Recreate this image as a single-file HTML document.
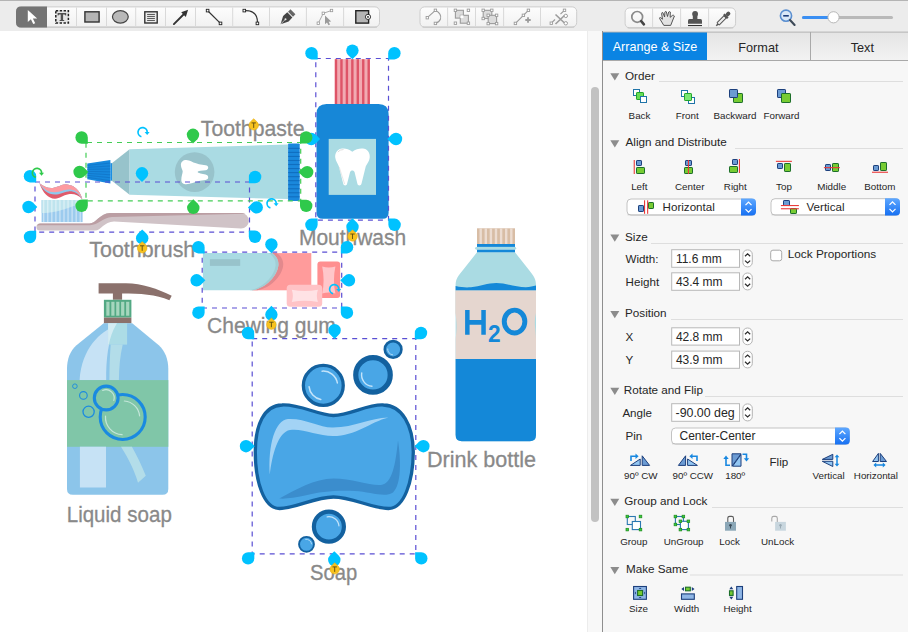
<!DOCTYPE html><html><head><meta charset="utf-8"><style>
*{margin:0;padding:0;box-sizing:border-box}
html,body{width:908px;height:632px;overflow:hidden;background:#fff;font-family:"Liberation Sans",sans-serif;position:relative}
.t{position:absolute;white-space:nowrap}
.a{position:absolute}
</style></head><body>
<svg class="a" style="left:0;top:0" width="587" height="632" viewBox="0 0 587 632"><rect x="334.8" y="59.2" width="35.2" height="46" fill="#f2aab2"/>
<rect x="334.80" y="59.2" width="2.4" height="46" fill="#de5467"/>
<rect x="340.25" y="59.2" width="2.4" height="46" fill="#de5467"/>
<rect x="345.70" y="59.2" width="2.4" height="46" fill="#de5467"/>
<rect x="351.15" y="59.2" width="2.4" height="46" fill="#de5467"/>
<rect x="356.60" y="59.2" width="2.4" height="46" fill="#de5467"/>
<rect x="362.05" y="59.2" width="2.4" height="46" fill="#de5467"/>
<rect x="367.50" y="59.2" width="2.4" height="46" fill="#de5467"/>
<path d="M326.5 104 H378.5 Q388.6 104 388.6 114 V212.8 Q388.6 218.8 382.6 218.8 H322.5 Q316.5 218.8 316.5 212.8 V114 Q316.5 104 326.5 104 Z" fill="#1787d7"/>
<rect x="328.7" y="138.9" width="47.3" height="56" fill="#aadbe3"/>
<path transform="translate(335.3 148.3)" d="M17 3.4 C13 0.5 9 -0.5 5.5 0.5 C1 1.8 -0.5 6 0 9.5 C0.5 13 2.5 15 3.5 18 L7.8 35 C8.2 37.8 11.4 37.8 11.8 35.5 L14.7 24 C15.5 21.5 18.5 21.5 19.3 24 L22.1 35.5 C22.5 37.8 25.8 37.8 26.3 35 L30.5 18 C32 15 34 13 34.4 9.5 C34.8 6 33.5 1.8 29 0.5 C25.5 -0.5 21 0.5 17 3.4 Z" fill="#fff"/>
<path d="M337.8 152 Q340 149.5 343.5 149.5" stroke="#c8c8c8" stroke-width="0.6" fill="none"/><path d="M339.2 167 L344.6 184" stroke="#d8d8d8" stroke-width="0.6" fill="none"/>
<path d="M40 223.5 H89.5 C96 223.5 100 213.3 110 213 L241 213 A7.8 7.8 0 0 1 241 228.6 L114 221.4 C104 221.4 101 230.6 95 230.6 H40 A3.55 3.55 0 0 1 40 223.5 Z" fill="#d0c3c7"/>
<path d="M40 223.5 H89.5 C96 223.5 100 213.3 110 213 L241 213 C243 213 244.5 213.3 245.5 213.8 L112 217 C103 217.5 98 225.2 90 225.2 H40 Q38 225.2 37 225.6 Q38 223.5 40 223.5 Z" fill="#bb9ea3"/>
<rect x="41.6" y="200.1" width="41" height="22" fill="#9ccbee"/>
<path d="M41.6 200.1 H82.6 V204.7 C72 204 62 213 41.6 213 Z" fill="#bfe4ee"/>
<rect x="43.20" y="200.1" width="1.1" height="22" fill="#ffffff" opacity="0.55"/>
<rect x="47.25" y="200.1" width="1.1" height="22" fill="#ffffff" opacity="0.55"/>
<rect x="51.30" y="200.1" width="1.1" height="22" fill="#ffffff" opacity="0.55"/>
<rect x="55.35" y="200.1" width="1.1" height="22" fill="#ffffff" opacity="0.55"/>
<rect x="59.40" y="200.1" width="1.1" height="22" fill="#ffffff" opacity="0.55"/>
<rect x="63.45" y="200.1" width="1.1" height="22" fill="#ffffff" opacity="0.55"/>
<rect x="67.50" y="200.1" width="1.1" height="22" fill="#ffffff" opacity="0.55"/>
<rect x="71.55" y="200.1" width="1.1" height="22" fill="#ffffff" opacity="0.55"/>
<rect x="75.60" y="200.1" width="1.1" height="22" fill="#ffffff" opacity="0.55"/>
<rect x="79.65" y="200.1" width="1.1" height="22" fill="#ffffff" opacity="0.55"/>
<path d="M39.4 183.3 C44 187 48 188.5 53 188 C58 187.5 62 184 67 184.4 C74 185 80 190 82.3 199.2 C78 195 74 193.5 68.5 194.3 C63 195 60 198.7 55 198.7 C48 198.7 43 193 39.4 183.3 Z" fill="#e05b6b"/>
<path d="M39.4 183.3 C44 187 48 188.5 53 188 C58 187.5 62 184 67 184.4 C74 185 80 190 82.3 199.2 C78 193 74 191 68.5 191.4 C63 191.8 60 194.5 55 194.5 C48 194.5 43 190.5 39.4 183.3 Z" fill="#8ec8ec"/>
<path d="M39.4 183.3 C44 187 48 188.5 53 188 C58 187.5 62 184 67 184.4 C74 185 80 190 82.3 199.2 C78 191.5 74 189.5 68.5 189.6 C63 189.8 60 192.3 55 192.3 C48 192.3 43 189 39.4 183.3 Z" fill="#fd9aa1"/>
<path d="M111.5 163.4 L129.6 149.3 V194.7 L111.5 180.6 Z" fill="#97c3cb"/>
<path d="M129.6 149.3 L288.1 144.5 V199.1 L129.6 194.7 Z" fill="#aadbe3"/>
<rect x="288.1" y="143.5" width="11.6" height="57.5" rx="0.8" fill="#1a88dc"/>
<rect x="288.1" y="147.80" width="11.6" height="1.1" fill="#0e66b6" opacity="0.75"/>
<rect x="288.1" y="151.84" width="11.6" height="1.1" fill="#0e66b6" opacity="0.75"/>
<rect x="288.1" y="155.88" width="11.6" height="1.1" fill="#0e66b6" opacity="0.75"/>
<rect x="288.1" y="159.92" width="11.6" height="1.1" fill="#0e66b6" opacity="0.75"/>
<rect x="288.1" y="163.96" width="11.6" height="1.1" fill="#0e66b6" opacity="0.75"/>
<rect x="288.1" y="168.00" width="11.6" height="1.1" fill="#0e66b6" opacity="0.75"/>
<rect x="288.1" y="172.04" width="11.6" height="1.1" fill="#0e66b6" opacity="0.75"/>
<rect x="288.1" y="176.08" width="11.6" height="1.1" fill="#0e66b6" opacity="0.75"/>
<rect x="288.1" y="180.12" width="11.6" height="1.1" fill="#0e66b6" opacity="0.75"/>
<rect x="288.1" y="184.16" width="11.6" height="1.1" fill="#0e66b6" opacity="0.75"/>
<rect x="288.1" y="188.20" width="11.6" height="1.1" fill="#0e66b6" opacity="0.75"/>
<rect x="288.1" y="192.24" width="11.6" height="1.1" fill="#0e66b6" opacity="0.75"/>
<rect x="288.1" y="196.28" width="11.6" height="1.1" fill="#0e66b6" opacity="0.75"/>
<path d="M87.3 163.4 L110.4 160.1 V183.6 L87.3 179.3 Z" fill="#1688dd"/>
<path d="M87.3 165.39 L110.4 163.04" stroke="#0e6abc" stroke-width="0.7" opacity="0.7"/>
<path d="M87.3 167.38 L110.4 165.97" stroke="#0e6abc" stroke-width="0.7" opacity="0.7"/>
<path d="M87.3 169.36 L110.4 168.91" stroke="#0e6abc" stroke-width="0.7" opacity="0.7"/>
<path d="M87.3 171.35 L110.4 171.85" stroke="#0e6abc" stroke-width="0.7" opacity="0.7"/>
<path d="M87.3 173.34 L110.4 174.79" stroke="#0e6abc" stroke-width="0.7" opacity="0.7"/>
<path d="M87.3 175.33 L110.4 177.72" stroke="#0e6abc" stroke-width="0.7" opacity="0.7"/>
<path d="M87.3 177.31 L110.4 180.66" stroke="#0e6abc" stroke-width="0.7" opacity="0.7"/>
<rect x="110.4" y="163.2" width="1.6" height="17.4" fill="#1a8ee3"/>
<circle cx="194.6" cy="172.1" r="19.8" fill="#98c3cb"/>
<path d="M186.2 160 C183 160 180.9 162 180.9 165 C180.9 168 182.7 170 182.7 171.4 C182.7 173 181.3 176 181.3 180 C181.3 183 183.5 184.2 186.2 184.2 C190 184.2 195 182 200 180.8 L205.5 179.9 C207.5 179.5 208.2 178.5 208.2 177.4 C208.2 176 207.3 175 205.5 174.6 L200.5 173.5 C198.5 173 197.6 172.6 197.6 172.1 C197.6 171.6 198.5 171.2 200.5 170.8 L205.5 170.3 C207.3 170 208.2 169 208.2 167.5 C208.2 166.3 207.3 165.5 205.5 165.3 L199 164.2 C195 163.5 191.5 161.5 189 160.6 C188 160.2 187 160 186.2 160 Z" fill="#fff"/>
<rect x="252" y="253.1" width="59.3" height="37.2" fill="#ff9b9b"/>
<path d="M271.9 253.1 H276.3 C282.3 256.5 283.8 262 283.1 266 C281.8 276 270.8 288 257.5 290.3 H252.7 C266 288 277 276 278.3 266 C279 262 277.5 256.5 271.9 253.1 Z" fill="#e3898d"/>
<path d="M202.9 253.1 H271.9 C277.5 256.5 279 262 278.3 266 C277 276 266 288 252.7 290.3 H202.9 Z" fill="#aadbe3"/>
<path d="M271.9 253.1 C277.5 256.5 279 262 278.3 266 C277 276 266 288 252.7 290.3 H249.5 C263 288 274.5 276 275.5 266 C276 262 274.5 256.5 269 253.1 Z" fill="#9cc9cf" opacity="0.7"/>
<rect x="209.9" y="259.2" width="30.3" height="6.7" fill="#98c3cb"/>
<rect x="317.4" y="261.6" width="22.8" height="36.4" rx="3" fill="#ff8f90"/>
<path d="M322.2 266.4 Q328.8 268.5 335.4 266.4 Q332.5 280 335.4 293.5 Q328.8 291.4 322.2 293.5 Q325 280 322.2 266.4 Z" fill="#ffc6ca"/>
<rect x="286.7" y="284.7" width="35.5" height="22.1" rx="3.5" fill="#ffc3c6"/>
<path d="M291.8 289.8 Q304.8 292.3 317.9 289.8 Q315.8 295.9 317.9 302 Q304.8 299.5 291.8 302 Q293.9 295.9 291.8 289.8 Z" fill="#ffe2e5"/>
<path d="M98.6 283.3 H126 C142 283.5 158 289 171.7 295.8 L169.4 300.2 C156 294.5 140 293.6 122.1 293.6 V299.8 H112.9 V293.6 H98.6 Z" fill="#8b716c"/>
<rect x="103.9" y="299.8" width="27.5" height="17.8" fill="#53a984"/>
<rect x="106.3" y="301.8" width="3.2" height="13.9" fill="#a6d6be"/>
<rect x="111.3" y="301.8" width="3.2" height="13.9" fill="#a6d6be"/>
<rect x="116.2" y="301.8" width="3.2" height="13.9" fill="#a6d6be"/>
<rect x="121.1" y="301.8" width="3.2" height="13.9" fill="#a6d6be"/>
<rect x="126.1" y="301.8" width="3.2" height="13.9" fill="#a6d6be"/>
<rect x="103.9" y="317.6" width="27.5" height="5.8" fill="#8b716c"/>
<path d="M103.7 323.3 H132.2 L158.8 345.2 C165 351 168.3 359 168.3 369 V489 Q168.3 494.8 162.5 494.8 H72.8 Q67 494.8 67 489 V369 C67 359 70 351 76.5 345.2 Z" fill="#8cc5ea"/>
<path d="M115.7 325.6 C100 332 82 348 79.6 380.1 H106.2 C106 360 108 340 115.7 325.6 Z" fill="#c6e2f5"/>
<rect x="108.1" y="323.3" width="19" height="21.3" fill="#acdce6"/>
<path d="M115.7 325.6 C112.5 331 110.2 338 108.8 344.6 H108.1 V323.3 H117 Z" fill="#d4ecf3"/>
<path d="M110.7 344.6 H122.7 C120 356 119 368 118.9 380.1 H109.4 C109.5 368 109.8 356 110.7 344.6 Z" fill="#b3dde9"/>
<rect x="67" y="380.1" width="101.3" height="66.7" fill="#80c6a8"/>
<rect x="79.9" y="446.7" width="26.1" height="40.8" fill="#c6e2f5"/>
<path d="M121 446.7 H131.9 C137 456 142 466 145.8 475.7 L138 482.8 C134.5 470 128 458 121 446.7 Z" fill="#b3dde9"/>
<circle cx="122.7" cy="417" r="22.5" fill="none" stroke="#1a8ae0" stroke-width="3.1"/>
<circle cx="106.2" cy="398" r="11.9" fill="#80c6a8" stroke="#1a8ae0" stroke-width="3.1"/>
<circle cx="88.6" cy="411.8" r="5.6" fill="none" stroke="#1a8ae0" stroke-width="1.3"/>
<circle cx="83.4" cy="395.4" r="3.8" fill="none" stroke="#1a8ae0" stroke-width="1.1"/>
<circle cx="74.9" cy="386.2" r="2.3" fill="none" stroke="#1a8ae0" stroke-width="0.9"/>
<path d="M122.1 434.7 A17.5 17.5 0 0 1 105.5 416" stroke="#c4e6da" stroke-width="1.2" fill="none" stroke-linecap="round"/>
<path d="M124.4 401 A16.5 16.5 0 0 1 139.6 415.8" stroke="#c4e6da" stroke-width="1.2" fill="none" stroke-linecap="round"/>
<path d="M102.6 390.4 A8.3 8.3 0 0 1 113.8 400.5" stroke="#c4e6da" stroke-width="1.1" fill="none" stroke-linecap="round"/>
<path d="M282 405 C300 404 318 415.2 333.4 415.5 C350 415.2 368 404 383.5 405 C402 405.5 413 425 413.3 452 C413 482 404 508.5 388.5 508.5 C372 508.5 352 497 333.4 497 C315 497 295 508.5 279.5 508.5 C264 508.5 255.3 482 255.3 452 C255.3 425 264 405.5 282 405 Z" fill="#49a6e6" stroke="#13619f" stroke-width="3.3"/>
<path d="M269.8 474.7 C268 445 275 420 288 419 C305 418 320 428 333 427.5 C355 427 370 418 388.5 417.4 C370 422 356 436 333 436 C318 436 302 428 290 430 C278 432 272 455 269.8 474.7 Z" fill="#a3d3f5"/>
<path d="M279.3 498.5 C295 490 315 478.5 333.4 478.5 C352 478.5 370 486 381 485 C392 484 395.5 465 398 440.6 C401 460 401.5 485 393 492.5 C385 498 370 491.8 355 491 C340 490 320 491 305 495.6 C295 498 285 499 279.3 498.5 Z" fill="#3b8dcd"/>
<circle cx="323.3" cy="385.4" r="19.95" fill="#49a6e6" stroke="#13619f" stroke-width="3.3"/>
<path d="M322.06 371.18 A14.27 14.27 0 0 1 337.36 382.92" stroke="#c4e4fa" stroke-width="1.51" fill="none" stroke-linecap="round"/>
<path d="M320.82 399.46 A14.27 14.27 0 0 1 309.08 386.64" stroke="#c4e4fa" stroke-width="1.51" fill="none" stroke-linecap="round"/>
<circle cx="373" cy="374.9" r="17.25" fill="#49a6e6" stroke="#13619f" stroke-width="5.2"/>
<path d="M372.00 386.28 A11.43 11.43 0 0 1 361.75 372.92" stroke="#c4e4fa" stroke-width="1.39" fill="none" stroke-linecap="round"/>
<circle cx="393.1" cy="349.4" r="8.30" fill="#49a6e6" stroke="#13619f" stroke-width="2.6"/>
<path d="M392.62 354.84 A5.46 5.46 0 0 1 387.66 348.92" stroke="#c4e4fa" stroke-width="0.80" fill="none" stroke-linecap="round"/>
<circle cx="328.9" cy="526.7" r="15.00" fill="#49a6e6" stroke="#13619f" stroke-width="4.2"/>
<path d="M327.15 516.79 A10.06 10.06 0 0 1 338.92 525.82" stroke="#c4e4fa" stroke-width="1.20" fill="none" stroke-linecap="round"/>
<circle cx="306.5" cy="544.3" r="7.45" fill="#49a6e6" stroke="#13619f" stroke-width="1.9"/>
<path d="M305.62 539.31 A5.07 5.07 0 0 1 311.55 543.86" stroke="#c4e4fa" stroke-width="0.80" fill="none" stroke-linecap="round"/>
<rect x="477" y="228.3" width="38" height="16" fill="#d8bda5"/>
<rect x="479.50" y="228.3" width="2.4" height="16" fill="#ecdcd1"/>
<rect x="484.60" y="228.3" width="2.4" height="16" fill="#ecdcd1"/>
<rect x="489.70" y="228.3" width="2.4" height="16" fill="#ecdcd1"/>
<rect x="494.80" y="228.3" width="2.4" height="16" fill="#ecdcd1"/>
<rect x="499.90" y="228.3" width="2.4" height="16" fill="#ecdcd1"/>
<rect x="505.00" y="228.3" width="2.4" height="16" fill="#ecdcd1"/>
<rect x="510.10" y="228.3" width="2.4" height="16" fill="#ecdcd1"/>
<path d="M477 252.3 H515 L528.8 269.8 C533.8 275.8 536 279.5 536 285 V435 Q536 441.2 530 441.2 H461.6 Q455.6 441.2 455.6 435 V285 C455.6 279.5 458 275.8 463.2 269.8 Z" fill="#aadbe3"/>
<rect x="477" y="244" width="38" height="2.9" fill="#1488d8"/>
<rect x="475.1" y="246.9" width="41.1" height="2.8" rx="1.4" fill="#aadbe3"/>
<rect x="477" y="249.7" width="38" height="2.6" fill="#1488d8"/>
<path d="M455.6 286.1 C462 287.5 466 287.5 471 287.3 C480 286.5 488 283.1 496.3 283.1 C506 283.1 516 287.3 525.9 287.3 C530 287.3 533 286 536 285.5 V290.6 H455.6 Z" fill="#1488d8"/>
<path d="M455.3 290.5 H536 V313 C535 318 534.5 322 535 326 C535.5 331 536 335 536 339 V359 H455.6 V339 C456 335 456.6 331 456.6 326 C456.6 321 456 317 455.3 313 Z" fill="#e5d6cf"/>
<path d="M455.6 359 H536 V435 Q536 441.2 529.8 441.2 H461.8 Q455.6 441.2 455.6 435 Z" fill="#1488d8"/>
<path d="M465.1 310 H469.6 V320 H481.3 V310 H485.8 V334.8 H481.3 V324.8 H469.6 V334.8 H465.1 Z" fill="#1488d8"/>
<ellipse cx="514.55" cy="321.55" rx="10.3" ry="11.4" fill="none" stroke="#1488d8" stroke-width="4.9"/>
<text x="488" y="341.5" font-family="Liberation Sans" font-weight="bold" font-size="23.5" fill="#1488d8" textLength="12.6" lengthAdjust="spacingAndGlyphs">2</text>
<text x="200.79" y="136.2" font-family="Liberation Sans" font-size="22.5" fill="#898989" stroke="#898989" stroke-width="0.3" textLength="103.7" lengthAdjust="spacingAndGlyphs">Toothpaste</text>
<text x="89.36" y="257.2" font-family="Liberation Sans" font-size="22.5" fill="#898989" stroke="#898989" stroke-width="0.3" textLength="105.9" lengthAdjust="spacingAndGlyphs">Toothbrush</text>
<text x="298.91" y="244.5" font-family="Liberation Sans" font-size="22.5" fill="#898989" stroke="#898989" stroke-width="0.3" textLength="107.3" lengthAdjust="spacingAndGlyphs">Mouthwash</text>
<text x="207.02" y="333.3" font-family="Liberation Sans" font-size="22.5" fill="#898989" stroke="#898989" stroke-width="0.3" textLength="128.7" lengthAdjust="spacingAndGlyphs">Chewing gum</text>
<text x="66.71" y="522.0" font-family="Liberation Sans" font-size="22.5" fill="#898989" stroke="#898989" stroke-width="0.3" textLength="105.1" lengthAdjust="spacingAndGlyphs">Liquid soap</text>
<text x="310.11" y="579.5" font-family="Liberation Sans" font-size="22.5" fill="#898989" stroke="#898989" stroke-width="0.3" textLength="47.2" lengthAdjust="spacingAndGlyphs">Soap</text>
<text x="426.94" y="467.2" font-family="Liberation Sans" font-size="22.5" fill="#898989" stroke="#898989" stroke-width="0.3" textLength="109.1" lengthAdjust="spacingAndGlyphs">Drink bottle</text>
<rect x="35" y="182" width="214.50" height="50.20" fill="none" stroke="#5a4fd4" stroke-width="1.2" stroke-dasharray="5 5" stroke-dashoffset="0"/>
<rect x="86" y="142.5" width="214.70" height="58.40" fill="none" stroke="#45cd57" stroke-width="1.2" stroke-dasharray="5 5" stroke-dashoffset="-1"/>
<rect x="315.8" y="58.5" width="72.70" height="161.70" fill="none" stroke="#5a4fd4" stroke-width="1.2" stroke-dasharray="5 5" stroke-dashoffset="0"/>
<rect x="202.2" y="252.2" width="139.50" height="55.80" fill="none" stroke="#5a4fd4" stroke-width="1.2" stroke-dasharray="5 5" stroke-dashoffset="0"/>
<rect x="252.2" y="338.6" width="163.60" height="215.30" fill="none" stroke="#5a4fd4" stroke-width="1.2" stroke-dasharray="5 5" stroke-dashoffset="0"/>
<path transform="translate(36.20 182.40) rotate(0)" d="M0 0 L-6.2 0 A6.2 6.2 0 0 1 -12.4 -6.2 A6.2 6.2 0 0 1 -6.2 -12.4 A6.2 6.2 0 0 1 0 -6.2 Z" fill="#00c2ff"/>
<path transform="translate(142.00 182.07) rotate(45)" d="M0 0 L-6.2 0 A6.2 6.2 0 0 1 -12.4 -6.2 A6.2 6.2 0 0 1 -6.2 -12.4 A6.2 6.2 0 0 1 0 -6.2 Z" fill="#00c2ff"/>
<path transform="translate(248.90 183.20) rotate(90)" d="M0 0 L-6.2 0 A6.2 6.2 0 0 1 -12.4 -6.2 A6.2 6.2 0 0 1 -6.2 -12.4 A6.2 6.2 0 0 1 0 -6.2 Z" fill="#00c2ff"/>
<path transform="translate(37.27 207.00) rotate(-45)" d="M0 0 L-6.2 0 A6.2 6.2 0 0 1 -12.4 -6.2 A6.2 6.2 0 0 1 -6.2 -12.4 A6.2 6.2 0 0 1 0 -6.2 Z" fill="#00c2ff"/>
<path transform="translate(247.93 207.40) rotate(135)" d="M0 0 L-6.2 0 A6.2 6.2 0 0 1 -12.4 -6.2 A6.2 6.2 0 0 1 -6.2 -12.4 A6.2 6.2 0 0 1 0 -6.2 Z" fill="#00c2ff"/>
<path transform="translate(36.20 230.80) rotate(270)" d="M0 0 L-6.2 0 A6.2 6.2 0 0 1 -12.4 -6.2 A6.2 6.2 0 0 1 -6.2 -12.4 A6.2 6.2 0 0 1 0 -6.2 Z" fill="#00c2ff"/>
<path transform="translate(142.20 229.43) rotate(225)" d="M0 0 L-6.2 0 A6.2 6.2 0 0 1 -12.4 -6.2 A6.2 6.2 0 0 1 -6.2 -12.4 A6.2 6.2 0 0 1 0 -6.2 Z" fill="#00c2ff"/>
<path transform="translate(248.80 230.60) rotate(180)" d="M0 0 L-6.2 0 A6.2 6.2 0 0 1 -12.4 -6.2 A6.2 6.2 0 0 1 -6.2 -12.4 A6.2 6.2 0 0 1 0 -6.2 Z" fill="#00c2ff"/>
<path transform="translate(317.70 59.40) rotate(0)" d="M0 0 L-6.2 0 A6.2 6.2 0 0 1 -12.4 -6.2 A6.2 6.2 0 0 1 -6.2 -12.4 A6.2 6.2 0 0 1 0 -6.2 Z" fill="#00c2ff"/>
<path transform="translate(352.40 59.37) rotate(45)" d="M0 0 L-6.2 0 A6.2 6.2 0 0 1 -12.4 -6.2 A6.2 6.2 0 0 1 -6.2 -12.4 A6.2 6.2 0 0 1 0 -6.2 Z" fill="#00c2ff"/>
<path transform="translate(388.20 59.40) rotate(90)" d="M0 0 L-6.2 0 A6.2 6.2 0 0 1 -12.4 -6.2 A6.2 6.2 0 0 1 -6.2 -12.4 A6.2 6.2 0 0 1 0 -6.2 Z" fill="#00c2ff"/>
<path transform="translate(320.07 139.00) rotate(-45)" d="M0 0 L-6.2 0 A6.2 6.2 0 0 1 -12.4 -6.2 A6.2 6.2 0 0 1 -6.2 -12.4 A6.2 6.2 0 0 1 0 -6.2 Z" fill="#00c2ff"/>
<path transform="translate(387.23 139.00) rotate(135)" d="M0 0 L-6.2 0 A6.2 6.2 0 0 1 -12.4 -6.2 A6.2 6.2 0 0 1 -6.2 -12.4 A6.2 6.2 0 0 1 0 -6.2 Z" fill="#00c2ff"/>
<path transform="translate(317.60 218.60) rotate(270)" d="M0 0 L-6.2 0 A6.2 6.2 0 0 1 -12.4 -6.2 A6.2 6.2 0 0 1 -6.2 -12.4 A6.2 6.2 0 0 1 0 -6.2 Z" fill="#00c2ff"/>
<path transform="translate(352.50 218.23) rotate(225)" d="M0 0 L-6.2 0 A6.2 6.2 0 0 1 -12.4 -6.2 A6.2 6.2 0 0 1 -6.2 -12.4 A6.2 6.2 0 0 1 0 -6.2 Z" fill="#00c2ff"/>
<path transform="translate(388.40 218.60) rotate(180)" d="M0 0 L-6.2 0 A6.2 6.2 0 0 1 -12.4 -6.2 A6.2 6.2 0 0 1 -6.2 -12.4 A6.2 6.2 0 0 1 0 -6.2 Z" fill="#00c2ff"/>
<path transform="translate(204.60 253.40) rotate(0)" d="M0 0 L-6.2 0 A6.2 6.2 0 0 1 -12.4 -6.2 A6.2 6.2 0 0 1 -6.2 -12.4 A6.2 6.2 0 0 1 0 -6.2 Z" fill="#00c2ff"/>
<path transform="translate(271.40 253.17) rotate(45)" d="M0 0 L-6.2 0 A6.2 6.2 0 0 1 -12.4 -6.2 A6.2 6.2 0 0 1 -6.2 -12.4 A6.2 6.2 0 0 1 0 -6.2 Z" fill="#00c2ff"/>
<path transform="translate(340.80 253.40) rotate(90)" d="M0 0 L-6.2 0 A6.2 6.2 0 0 1 -12.4 -6.2 A6.2 6.2 0 0 1 -6.2 -12.4 A6.2 6.2 0 0 1 0 -6.2 Z" fill="#00c2ff"/>
<path transform="translate(205.37 280.30) rotate(-45)" d="M0 0 L-6.2 0 A6.2 6.2 0 0 1 -12.4 -6.2 A6.2 6.2 0 0 1 -6.2 -12.4 A6.2 6.2 0 0 1 0 -6.2 Z" fill="#00c2ff"/>
<path transform="translate(340.23 280.30) rotate(135)" d="M0 0 L-6.2 0 A6.2 6.2 0 0 1 -12.4 -6.2 A6.2 6.2 0 0 1 -6.2 -12.4 A6.2 6.2 0 0 1 0 -6.2 Z" fill="#00c2ff"/>
<path transform="translate(204.60 306.50) rotate(270)" d="M0 0 L-6.2 0 A6.2 6.2 0 0 1 -12.4 -6.2 A6.2 6.2 0 0 1 -6.2 -12.4 A6.2 6.2 0 0 1 0 -6.2 Z" fill="#00c2ff"/>
<path transform="translate(271.40 305.83) rotate(225)" d="M0 0 L-6.2 0 A6.2 6.2 0 0 1 -12.4 -6.2 A6.2 6.2 0 0 1 -6.2 -12.4 A6.2 6.2 0 0 1 0 -6.2 Z" fill="#00c2ff"/>
<path transform="translate(340.80 306.50) rotate(180)" d="M0 0 L-6.2 0 A6.2 6.2 0 0 1 -12.4 -6.2 A6.2 6.2 0 0 1 -6.2 -12.4 A6.2 6.2 0 0 1 0 -6.2 Z" fill="#00c2ff"/>
<path transform="translate(254.20 339.20) rotate(0)" d="M0 0 L-6.2 0 A6.2 6.2 0 0 1 -12.4 -6.2 A6.2 6.2 0 0 1 -6.2 -12.4 A6.2 6.2 0 0 1 0 -6.2 Z" fill="#00c2ff"/>
<path transform="translate(334.60 338.97) rotate(45)" d="M0 0 L-6.2 0 A6.2 6.2 0 0 1 -12.4 -6.2 A6.2 6.2 0 0 1 -6.2 -12.4 A6.2 6.2 0 0 1 0 -6.2 Z" fill="#00c2ff"/>
<path transform="translate(414.80 339.20) rotate(90)" d="M0 0 L-6.2 0 A6.2 6.2 0 0 1 -12.4 -6.2 A6.2 6.2 0 0 1 -6.2 -12.4 A6.2 6.2 0 0 1 0 -6.2 Z" fill="#00c2ff"/>
<path transform="translate(254.77 446.20) rotate(-45)" d="M0 0 L-6.2 0 A6.2 6.2 0 0 1 -12.4 -6.2 A6.2 6.2 0 0 1 -6.2 -12.4 A6.2 6.2 0 0 1 0 -6.2 Z" fill="#00c2ff"/>
<path transform="translate(414.63 446.20) rotate(135)" d="M0 0 L-6.2 0 A6.2 6.2 0 0 1 -12.4 -6.2 A6.2 6.2 0 0 1 -6.2 -12.4 A6.2 6.2 0 0 1 0 -6.2 Z" fill="#00c2ff"/>
<path transform="translate(254.30 552.20) rotate(270)" d="M0 0 L-6.2 0 A6.2 6.2 0 0 1 -12.4 -6.2 A6.2 6.2 0 0 1 -6.2 -12.4 A6.2 6.2 0 0 1 0 -6.2 Z" fill="#00c2ff"/>
<path transform="translate(334.30 551.23) rotate(225)" d="M0 0 L-6.2 0 A6.2 6.2 0 0 1 -12.4 -6.2 A6.2 6.2 0 0 1 -6.2 -12.4 A6.2 6.2 0 0 1 0 -6.2 Z" fill="#00c2ff"/>
<path transform="translate(415.10 552.20) rotate(180)" d="M0 0 L-6.2 0 A6.2 6.2 0 0 1 -12.4 -6.2 A6.2 6.2 0 0 1 -6.2 -12.4 A6.2 6.2 0 0 1 0 -6.2 Z" fill="#00c2ff"/>
<path transform="translate(87.80 143.70) rotate(0)" d="M0 0 L-6.2 0 A6.2 6.2 0 0 1 -12.4 -6.2 A6.2 6.2 0 0 1 -6.2 -12.4 A6.2 6.2 0 0 1 0 -6.2 Z" fill="#2fc94b"/>
<path transform="translate(193.00 143.57) rotate(45)" d="M0 0 L-6.2 0 A6.2 6.2 0 0 1 -12.4 -6.2 A6.2 6.2 0 0 1 -6.2 -12.4 A6.2 6.2 0 0 1 0 -6.2 Z" fill="#2fc94b"/>
<path transform="translate(300.00 143.60) rotate(90)" d="M0 0 L-6.2 0 A6.2 6.2 0 0 1 -12.4 -6.2 A6.2 6.2 0 0 1 -6.2 -12.4 A6.2 6.2 0 0 1 0 -6.2 Z" fill="#2fc94b"/>
<path transform="translate(88.37 172.00) rotate(-45)" d="M0 0 L-6.2 0 A6.2 6.2 0 0 1 -12.4 -6.2 A6.2 6.2 0 0 1 -6.2 -12.4 A6.2 6.2 0 0 1 0 -6.2 Z" fill="#2fc94b"/>
<path transform="translate(298.43 172.10) rotate(135)" d="M0 0 L-6.2 0 A6.2 6.2 0 0 1 -12.4 -6.2 A6.2 6.2 0 0 1 -6.2 -12.4 A6.2 6.2 0 0 1 0 -6.2 Z" fill="#2fc94b"/>
<path transform="translate(87.80 199.60) rotate(270)" d="M0 0 L-6.2 0 A6.2 6.2 0 0 1 -12.4 -6.2 A6.2 6.2 0 0 1 -6.2 -12.4 A6.2 6.2 0 0 1 0 -6.2 Z" fill="#2fc94b"/>
<path transform="translate(193.30 199.13) rotate(225)" d="M0 0 L-6.2 0 A6.2 6.2 0 0 1 -12.4 -6.2 A6.2 6.2 0 0 1 -6.2 -12.4 A6.2 6.2 0 0 1 0 -6.2 Z" fill="#2fc94b"/>
<path transform="translate(300.00 199.70) rotate(180)" d="M0 0 L-6.2 0 A6.2 6.2 0 0 1 -12.4 -6.2 A6.2 6.2 0 0 1 -6.2 -12.4 A6.2 6.2 0 0 1 0 -6.2 Z" fill="#2fc94b"/>
<g transform="translate(253.7 125.3)"><path d="M0 -6.6 L3.2 -3.6 A4.8 4.8 0 1 1 -3.2 -3.6 Z" fill="#f7c21f" stroke="#e0a810" stroke-width="0.5"/><path d="M-2.2 -2.4 H2.2 M0 -2.4 V2.6" stroke="#5a4a10" stroke-width="0.9"/></g>
<g transform="translate(142.2 248.2)"><path d="M0 -6.6 L3.2 -3.6 A4.8 4.8 0 1 1 -3.2 -3.6 Z" fill="#f7c21f" stroke="#e0a810" stroke-width="0.5"/><path d="M-2.2 -2.4 H2.2 M0 -2.4 V2.6" stroke="#5a4a10" stroke-width="0.9"/></g>
<g transform="translate(352.5 236.4)"><path d="M0 -6.6 L3.2 -3.6 A4.8 4.8 0 1 1 -3.2 -3.6 Z" fill="#f7c21f" stroke="#e0a810" stroke-width="0.5"/><path d="M-2.2 -2.4 H2.2 M0 -2.4 V2.6" stroke="#5a4a10" stroke-width="0.9"/></g>
<g transform="translate(271.4 324.6)"><path d="M0 -6.6 L3.2 -3.6 A4.8 4.8 0 1 1 -3.2 -3.6 Z" fill="#f7c21f" stroke="#e0a810" stroke-width="0.5"/><path d="M-2.2 -2.4 H2.2 M0 -2.4 V2.6" stroke="#5a4a10" stroke-width="0.9"/></g>
<g transform="translate(334.7 569.3)"><path d="M0 -6.6 L3.2 -3.6 A4.8 4.8 0 1 1 -3.2 -3.6 Z" fill="#f7c21f" stroke="#e0a810" stroke-width="0.5"/><path d="M-2.2 -2.4 H2.2 M0 -2.4 V2.6" stroke="#5a4a10" stroke-width="0.9"/></g>
<g transform="translate(142.6 132.3)"><path d="M-1.2 4.3999999999999995 A4.6 4.6 0 1 1 4.6 0.3" fill="none" stroke="#00c2ff" stroke-width="1.7"/><path d="M1.9999999999999996 -0.2 L7.0 -0.2 L4.6 2.8 Z" fill="#00c2ff"/></g>
<g transform="translate(271.6 203.5)"><path d="M-1.2 4.3999999999999995 A4.6 4.6 0 1 1 4.6 0.3" fill="none" stroke="#00c2ff" stroke-width="1.7"/><path d="M1.9999999999999996 -0.2 L7.0 -0.2 L4.6 2.8 Z" fill="#00c2ff"/></g>
<g transform="translate(334.2 289.3)"><path d="M-1.2 4.3999999999999995 A4.6 4.6 0 1 1 4.6 0.3" fill="none" stroke="#00c2ff" stroke-width="1.7"/><path d="M1.9999999999999996 -0.2 L7.0 -0.2 L4.6 2.8 Z" fill="#00c2ff"/></g>
<g transform="translate(37 173)"><path d="M-1.2 4.3999999999999995 A4.6 4.6 0 1 1 4.6 0.3" fill="none" stroke="#2fc94b" stroke-width="1.7"/><path d="M1.9999999999999996 -0.2 L7.0 -0.2 L4.6 2.8 Z" fill="#2fc94b"/></g></svg>
<div class="a" style="left:0;top:0;width:908px;height:31px;background:#ececec;border-top:1px solid #b4b4b4"></div>
<svg class="a" style="left:0;top:0" width="908" height="32" viewBox="0 0 908 32"><defs><linearGradient id="btng" x1="0" y1="0" x2="0" y2="1"><stop offset="0" stop-color="#fdfdfd"/><stop offset="1" stop-color="#f1f1f1"/></linearGradient></defs>
<rect x="16.5" y="6.9" width="363" height="20.200000000000003" rx="4.5" fill="url(#btng)" stroke="#cdcdcd" stroke-width="1"/>
<rect x="19" y="26.6" width="358" height="1" fill="#bdbdbd" opacity="0.7"/>
<rect x="76.0" y="7.4" width="1" height="19.200000000000003" fill="#d9d9d9"/>
<rect x="106.0" y="7.4" width="1" height="19.200000000000003" fill="#d9d9d9"/>
<rect x="135.2" y="7.4" width="1" height="19.200000000000003" fill="#d9d9d9"/>
<rect x="165.0" y="7.4" width="1" height="19.200000000000003" fill="#d9d9d9"/>
<rect x="195.0" y="7.4" width="1" height="19.200000000000003" fill="#d9d9d9"/>
<rect x="232.2" y="7.4" width="1" height="19.200000000000003" fill="#d9d9d9"/>
<rect x="269.0" y="7.4" width="1" height="19.200000000000003" fill="#d9d9d9"/>
<rect x="305.9" y="7.4" width="1" height="19.200000000000003" fill="#d9d9d9"/>
<rect x="343.1" y="7.4" width="1" height="19.200000000000003" fill="#d9d9d9"/>
<rect x="420.0" y="6.9" width="156.70000000000005" height="20.200000000000003" rx="4.5" fill="url(#btng)" stroke="#cdcdcd" stroke-width="1"/>
<rect x="422.5" y="26.6" width="151.70000000000005" height="1" fill="#bdbdbd" opacity="0.7"/>
<rect x="447.1" y="7.4" width="1" height="19.200000000000003" fill="#d9d9d9"/>
<rect x="475.0" y="7.4" width="1" height="19.200000000000003" fill="#d9d9d9"/>
<rect x="503.1" y="7.4" width="1" height="19.200000000000003" fill="#d9d9d9"/>
<rect x="540.0" y="7.4" width="1" height="19.200000000000003" fill="#d9d9d9"/>
<rect x="625.1" y="7.9" width="110.5" height="20.0" rx="4.5" fill="url(#btng)" stroke="#cdcdcd" stroke-width="1"/>
<rect x="627.6" y="27.4" width="105.5" height="1" fill="#bdbdbd" opacity="0.7"/>
<rect x="652.1" y="8.4" width="1" height="19.0" fill="#d9d9d9"/>
<rect x="680.1" y="8.4" width="1" height="19.0" fill="#d9d9d9"/>
<rect x="708.1" y="8.4" width="1" height="19.0" fill="#d9d9d9"/>
<path d="M21 6.4 H47 V27.6 H21 Q16 27.6 16 22.6 V11.4 Q16 6.4 21 6.4 Z" fill="#747474"/>
<path d="M27.8 9.9 L27.8 22 L30.9 19.3 L33.2 24.1 L35.2 23.2 L32.9 18.5 L37.2 18.4 Z" fill="#fff"/>
<rect x="55.8" y="10.8" width="12.6" height="12.2" fill="#e4e4e4" stroke="#222" stroke-width="1.5" stroke-dasharray="2.4 1.5"/>
<path d="M57.6 12.9 H66.2 V15.6 H65.4 Q65.2 14.6 64.2 14.6 H63.1 V19.9 H64.2 V20.9 H59.6 V19.9 H60.7 V14.6 H59.6 Q58.6 14.6 58.4 15.6 H57.6 Z" fill="#505050"/>
<rect x="84.9" y="11.8" width="14.2" height="10.2" fill="#b5b5b5" stroke="#333" stroke-width="1.4"/>
<ellipse cx="120.35" cy="16.85" rx="7.9" ry="6.2" fill="#b8b8b8" stroke="#444" stroke-width="1.2"/>
<rect x="144.8" y="11.8" width="12.4" height="11.2" fill="#ececec" stroke="#333" stroke-width="1.4"/>
<rect x="147.1" y="13.950000000000001" width="7.8" height="0.9" fill="#444"/>
<rect x="147.1" y="15.95" width="7.8" height="0.9" fill="#444"/>
<rect x="147.1" y="17.95" width="7.8" height="0.9" fill="#444"/>
<rect x="147.1" y="19.95" width="7.8" height="0.9" fill="#444"/>
<path d="M173.9 24.1 L184.5 13.5" stroke="#333" stroke-width="1.9" stroke-linecap="round"/>
<path d="M188.1 9.8 L181.2 12.2 L185.8 16.9 Z" fill="#333"/>
<path d="M208.2 11.2 L219.7 22.6" stroke="#333" stroke-width="1.2"/>
<rect x="206.3" y="9.3" width="2.6" height="2.6" fill="#fff" stroke="#222" stroke-width="0.9"/>
<rect x="219.2" y="22.1" width="2.6" height="2.6" fill="#fff" stroke="#222" stroke-width="0.9"/>
<path d="M245.5 10.6 Q257.4 10.6 257.4 22" stroke="#333" stroke-width="1.2" fill="none"/>
<rect x="243" y="9.3" width="2.6" height="2.6" fill="#fff" stroke="#222" stroke-width="0.9"/>
<rect x="256.1" y="22.1" width="2.6" height="2.6" fill="#fff" stroke="#222" stroke-width="0.9"/>
<g transform="translate(286.75 17.98) rotate(45) translate(0 1.25)"><rect x="-3.5" y="-10" width="7" height="3.4" fill="#666"/><path d="M-3.6 -5.6 H3.6 L3.9 0 L0 7.5 L-3.9 0 Z" fill="#444"/><path d="M0 0.5 V7.5" stroke="#e8e8e8" stroke-width="0.7"/><circle cx="0" cy="0.5" r="1" fill="#e8e8e8"/></g>
<path d="M318.3 23.2 L323.3 13.3 L331.5 10.5" stroke="#aaa" stroke-width="1" fill="none"/>
<rect x="317.1" y="22.0" width="2.4" height="2.4" fill="#fff" stroke="#999" stroke-width="0.8"/>
<rect x="322.1" y="12.100000000000001" width="2.4" height="2.4" fill="#fff" stroke="#999" stroke-width="0.8"/>
<rect x="330.3" y="9.3" width="2.4" height="2.4" fill="#fff" stroke="#999" stroke-width="0.8"/>
<path d="M325 15.5 L325 24.3 L327 22.5 L328.5 25.3 L330 24.6 L328.6 21.8 L331.2 21.6 Z" fill="#9a9a9a"/>
<rect x="355.8" y="10.7" width="12.8" height="12.4" fill="#b5b5b5" stroke="#222" stroke-width="1.4"/>
<circle cx="368" cy="16.9" r="2.6" fill="#fff" stroke="#222" stroke-width="0.9"/><circle cx="368" cy="16.9" r="0.9" fill="#222"/>
<path d="M427.3 17.7 L435.4 10.3 Q442 14 440.5 19 Q439 22.5 435.4 23.4" stroke="#9c9c9c" stroke-width="1.1" fill="none"/>
<rect x="426.10" y="16.50" width="2.4" height="2.4" fill="#fff" stroke="#9c9c9c" stroke-width="0.9"/>
<rect x="434.20" y="9.10" width="2.4" height="2.4" fill="#fff" stroke="#9c9c9c" stroke-width="0.9"/>
<rect x="434.20" y="22.20" width="2.4" height="2.4" fill="#fff" stroke="#9c9c9c" stroke-width="0.9"/>
<rect x="455.4" y="10.3" width="8" height="7.8" fill="#dcdcdc" stroke="#9c9c9c" stroke-width="1.1"/>
<rect x="460.3" y="15.3" width="8.1" height="7.9" fill="#dcdcdc" stroke="#9c9c9c" stroke-width="1.1"/>
<rect x="460.3" y="15.3" width="3.1" height="2.8" fill="#fff"/>
<rect x="454.20" y="9.10" width="2.4" height="2.4" fill="#fff" stroke="#9c9c9c" stroke-width="0.9"/>
<rect x="467.20" y="9.10" width="2.4" height="2.4" fill="#fff" stroke="#9c9c9c" stroke-width="0.9"/>
<rect x="454.20" y="22.00" width="2.4" height="2.4" fill="#fff" stroke="#9c9c9c" stroke-width="0.9"/>
<rect x="467.20" y="22.00" width="2.4" height="2.4" fill="#fff" stroke="#9c9c9c" stroke-width="0.9"/>
<rect x="483.2" y="10.3" width="8.6" height="8.2" fill="#dcdcdc" stroke="#9c9c9c" stroke-width="1.1"/>
<rect x="488.2" y="15.3" width="8.4" height="8.3" fill="#dcdcdc" stroke="#9c9c9c" stroke-width="1.1"/>
<rect x="482.00" y="9.10" width="2.4" height="2.4" fill="#fff" stroke="#9c9c9c" stroke-width="0.9"/>
<rect x="490.60" y="9.10" width="2.4" height="2.4" fill="#fff" stroke="#9c9c9c" stroke-width="0.9"/>
<rect x="482.00" y="17.30" width="2.4" height="2.4" fill="#fff" stroke="#9c9c9c" stroke-width="0.9"/>
<rect x="487.00" y="14.10" width="2.4" height="2.4" fill="#fff" stroke="#9c9c9c" stroke-width="0.9"/>
<rect x="495.40" y="14.10" width="2.4" height="2.4" fill="#fff" stroke="#9c9c9c" stroke-width="0.9"/>
<rect x="487.00" y="22.40" width="2.4" height="2.4" fill="#fff" stroke="#9c9c9c" stroke-width="0.9"/>
<rect x="495.40" y="22.40" width="2.4" height="2.4" fill="#fff" stroke="#9c9c9c" stroke-width="0.9"/>
<path d="M515.4 23.4 L528.4 10.3" stroke="#9c9c9c" stroke-width="1.1"/>
<rect x="514.20" y="22.20" width="2.4" height="2.4" fill="#fff" stroke="#9c9c9c" stroke-width="0.9"/>
<rect x="522.20" y="14.10" width="2.4" height="2.4" fill="#fff" stroke="#9c9c9c" stroke-width="0.9"/>
<rect x="527.20" y="9.10" width="2.4" height="2.4" fill="#fff" stroke="#9c9c9c" stroke-width="0.9"/>
<path d="M525.3 20 H530.7 M528 17.3 V22.7" stroke="#9c9c9c" stroke-width="1.8"/>
<path d="M551.3 23.2 L555 19.5 M560.5 14 L564.5 10.3" stroke="#9c9c9c" stroke-width="1.1"/>
<path d="M555.5 24 L564.5 15.5 M555.5 14.5 L564.5 23" stroke="#9c9c9c" stroke-width="1.6"/>
<circle cx="565.8" cy="15.9" r="1.7" fill="#fff" stroke="#9c9c9c" stroke-width="1"/><circle cx="565.8" cy="23.3" r="1.7" fill="#fff" stroke="#9c9c9c" stroke-width="1"/>
<rect x="550.10" y="22.00" width="2.4" height="2.4" fill="#fff" stroke="#9c9c9c" stroke-width="0.9"/>
<rect x="563.30" y="9.10" width="2.4" height="2.4" fill="#fff" stroke="#9c9c9c" stroke-width="0.9"/>
<circle cx="637.2" cy="16.9" r="5.4" fill="none" stroke="#8a8a8a" stroke-width="1.7"/>
<path d="M641.2 21.2 L643.9 24.3" stroke="#444" stroke-width="2.6" stroke-linecap="round"/>
<path d="M663.8 25.4 L659.6 18.5 Q659.3 17.4 660.6 17.6 L662.5 19.2 L661.6 13.6 Q661.6 12.3 662.9 12.7 L664.6 17 L664.9 12 Q665.3 11 666.3 11.7 L667.5 16.5 L668.7 12 Q669.4 11.2 670.3 12 L670.2 17.3 L672.6 15.3 Q673.8 15 674.4 16 L670.7 25.4 Z" fill="#e2e2e2" stroke="#444" stroke-width="0.9" stroke-linejoin="round"/>
<circle cx="695.1" cy="13.8" r="2.9" fill="#555"/><rect x="692.8" y="14" width="4.6" height="5.5" fill="#555"/>
<path d="M688 23.8 V20.4 Q688 18.9 689.5 18.9 H700.5 Q702 18.9 702 20.4 V23.8 Z" fill="#555"/>
<rect x="688" y="25" width="14" height="1.1" fill="#333"/>
<g transform="translate(723 19) rotate(45)"><rect x="-1.6" y="-3" width="3.2" height="10" rx="0.6" fill="#eee" stroke="#555" stroke-width="1"/><path d="M0 7 L0 9.5" stroke="#555" stroke-width="1.5"/><rect x="-2.8" y="-5.2" width="5.6" height="2.4" rx="0.5" fill="#555"/><rect x="-1.9" y="-9.5" width="3.8" height="4.6" rx="1.6" fill="#555"/></g>
<circle cx="786" cy="15.7" r="5.6" fill="#dae8f7" stroke="#5b8fd0" stroke-width="1.6"/>
<rect x="783.2" y="15" width="5.6" height="1.6" fill="#1d3d7b"/>
<path d="M790 20 L794.6 25" stroke="#3d4a58" stroke-width="2.1" stroke-linecap="round"/>
<rect x="802" y="16" width="91" height="3" rx="1.5" fill="#b9b9b9"/>
<rect x="802" y="16" width="31" height="3" rx="1.5" fill="#3a8ff3"/>
<circle cx="833.5" cy="17.3" r="5.6" fill="#fff" stroke="#b0b0b0" stroke-width="0.9"/></svg>
<div class="a" style="left:587px;top:31px;width:15px;height:601px;background:#f8f8f8;border-left:1px solid #ececec"></div>
<div class="a" style="left:591px;top:87px;width:8px;height:435px;background:#c2c2c2;border-radius:4px"></div>
<div class="a" style="left:602px;top:31px;width:306px;height:601px;background:#f7f7f7;border-left:1px solid #8e8e8e"></div>
<svg class="a" style="left:0;top:0" width="908" height="632" viewBox="0 0 908 632"><defs><linearGradient id="tabg" x1="0" y1="0" x2="0" y2="1"><stop offset="0" stop-color="#e4e4e4"/><stop offset="1" stop-color="#f2f2f2"/></linearGradient>
<linearGradient id="stepg" x1="0" y1="0" x2="0" y2="1"><stop offset="0" stop-color="#5fa8ff"/><stop offset="1" stop-color="#1670f2"/></linearGradient></defs>
<rect x="603" y="32" width="305" height="28" fill="url(#tabg)"/>
<rect x="603" y="32" width="104" height="28" fill="#0a84e3"/>
<rect x="603" y="31.5" width="305" height="1" fill="#b4b4b4"/>
<rect x="707" y="32" width="201" height="1" fill="#c6c6c6"/>
<rect x="603" y="60" width="305" height="1" fill="#a9a9a9"/>
<rect x="810" y="32" width="1" height="28" fill="#a9a9a9"/>
<path d="M610.3 73.2 L619.3 73.2 L614.8 80.5 Z" fill="#8c8c8c"/>
<rect x="659" y="81.0" width="244" height="1" fill="#dedede"/>
<path d="M610.3 140.2 L619.3 140.2 L614.8 147.5 Z" fill="#8c8c8c"/>
<rect x="735" y="148.0" width="168" height="1" fill="#dedede"/>
<path d="M610.3 234.5 L619.3 234.5 L614.8 241.8 Z" fill="#8c8c8c"/>
<rect x="651" y="243.0" width="252" height="1" fill="#dedede"/>
<path d="M610.3 311.0 L619.3 311.0 L614.8 318.3 Z" fill="#8c8c8c"/>
<rect x="671" y="319.0" width="232" height="1" fill="#dedede"/>
<path d="M610.3 387.7 L619.3 387.7 L614.8 395.0 Z" fill="#8c8c8c"/>
<rect x="705" y="396.0" width="198" height="1" fill="#dedede"/>
<path d="M610.3 498.8 L619.3 498.8 L614.8 506.1 Z" fill="#8c8c8c"/>
<rect x="712" y="507.0" width="191" height="1" fill="#dedede"/>
<path d="M610.3 567.0 L619.3 567.0 L614.8 574.3 Z" fill="#8c8c8c"/>
<rect x="690" y="574.5" width="213" height="1" fill="#dedede"/>
<rect x="633.5" y="89.5" width="6" height="6" fill="#ffffff" stroke="#1f74a8" stroke-width="1" rx="0"/>
<rect x="636.5" y="92.5" width="7" height="7" fill="#66dd55" stroke="#22a52a" stroke-width="1" rx="0.6"/>
<rect x="640.5" y="96.5" width="6" height="6" fill="#ffffff" stroke="#1f74a8" stroke-width="1" rx="0"/>
<rect x="681.5" y="90.5" width="6" height="6" fill="#ffffff" stroke="#1f74a8" stroke-width="1" rx="0"/>
<rect x="688.5" y="97.5" width="6" height="6" fill="#ffffff" stroke="#1f74a8" stroke-width="1" rx="0"/>
<rect x="684.5" y="93.5" width="7" height="7" fill="#7ae872" stroke="#22a52a" stroke-width="1" rx="0.6"/>
<rect x="733.5" y="93.5" width="9" height="9" fill="#77cc33" stroke="#1c6e2a" stroke-width="1" rx="0.6"/>
<rect x="729.5" y="89.5" width="8" height="8" fill="#6b9bd3" stroke="#1c3f7c" stroke-width="1" rx="0.6"/>
<rect x="777.5" y="89.5" width="8" height="8" fill="#6b9bd3" stroke="#1c3f7c" stroke-width="1" rx="0.6"/>
<rect x="781.5" y="93.5" width="9" height="9" fill="#77cc33" stroke="#1c6e2a" stroke-width="1" rx="0.6"/>
<rect x="636.5" y="160.5" width="5" height="5" fill="#6b9bd3" stroke="#1c3f7c" stroke-width="1" rx="0.6"/>
<rect x="636.5" y="167.5" width="8" height="6" fill="#77cc33" stroke="#1c6e2a" stroke-width="1" rx="0.6"/>
<rect x="633.7" y="160" width="1.1" height="14" fill="#ea3b3b"/>
<rect x="685.5" y="160.5" width="6" height="5" fill="#6b9bd3" stroke="#1c3f7c" stroke-width="1" rx="0.6"/>
<rect x="684.5" y="167.5" width="8" height="6" fill="#77cc33" stroke="#1c6e2a" stroke-width="1" rx="0.6"/>
<rect x="687.9" y="160" width="1.1" height="14" fill="#ea3b3b"/>
<rect x="732.5" y="159.5" width="5" height="5" fill="#6b9bd3" stroke="#1c3f7c" stroke-width="1" rx="0.6"/>
<rect x="729.5" y="166.5" width="8" height="6" fill="#77cc33" stroke="#1c6e2a" stroke-width="1" rx="0.6"/>
<rect x="738.9" y="159" width="1.1" height="14" fill="#ea3b3b"/>
<rect x="777.5" y="163.5" width="5" height="5" fill="#6b9bd3" stroke="#1c3f7c" stroke-width="1" rx="0.6"/>
<rect x="784.5" y="163.5" width="6" height="8" fill="#77cc33" stroke="#1c6e2a" stroke-width="1" rx="0.6"/>
<rect x="775.9" y="160.8" width="16" height="1.1" fill="#ea3b3b"/>
<rect x="825.5" y="164.5" width="5" height="6" fill="#6b9bd3" stroke="#1c3f7c" stroke-width="1" rx="0.6"/>
<rect x="832.5" y="163.5" width="6" height="8" fill="#77cc33" stroke="#1c6e2a" stroke-width="1" rx="0.6"/>
<rect x="823.9" y="167.1" width="16" height="1.1" fill="#ea3b3b"/>
<rect x="873.5" y="165.5" width="5" height="5" fill="#6b9bd3" stroke="#1c3f7c" stroke-width="1" rx="0.6"/>
<rect x="880.5" y="162.5" width="6" height="8" fill="#77cc33" stroke="#1c6e2a" stroke-width="1" rx="0.6"/>
<rect x="872" y="171.7" width="16" height="1.1" fill="#ea3b3b"/>
<rect x="627.0" y="199.0" width="128.5" height="16.099999999999994" rx="4" fill="#fff" stroke="#c3c3c3" stroke-width="1"/>
<rect x="627.5" y="214.4" width="127.5" height="0.9" fill="#b0b0b0" opacity="0.6"/>
<path d="M741 198.5 H752 Q756 198.5 756 202.5 V211.6 Q756 215.6 752 215.6 H741 Z" fill="url(#stepg)"/>
<path d="M745.5 205.1 L748.5 202.1 L751.5 205.1 M745.5 209.1 L748.5 212.1 L751.5 209.1" stroke="#fff" stroke-width="1.3" fill="none"/>
<rect x="771.0" y="198.7" width="128.5" height="16.400000000000006" rx="4" fill="#fff" stroke="#c3c3c3" stroke-width="1"/>
<rect x="771.5" y="214.4" width="127.5" height="0.9" fill="#b0b0b0" opacity="0.6"/>
<path d="M885 198.2 H896 Q900 198.2 900 202.2 V211.6 Q900 215.6 896 215.6 H885 Z" fill="url(#stepg)"/>
<path d="M889.5 204.9 L892.5 201.9 L895.5 204.9 M889.5 208.9 L892.5 211.9 L895.5 208.9" stroke="#fff" stroke-width="1.3" fill="none"/>
<rect x="671.5" y="428.0" width="177.79999999999995" height="16.100000000000023" rx="4" fill="#fff" stroke="#c3c3c3" stroke-width="1"/>
<rect x="672" y="443.40000000000003" width="176.79999999999995" height="0.9" fill="#b0b0b0" opacity="0.6"/>
<path d="M835 427.5 H845.8 Q849.8 427.5 849.8 431.5 V440.6 Q849.8 444.6 845.8 444.6 H835 Z" fill="url(#stepg)"/>
<path d="M839.4 434.1 L842.4 431.1 L845.4 434.1 M839.4 438.1 L842.4 441.1 L845.4 438.1" stroke="#fff" stroke-width="1.3" fill="none"/>
<rect x="638.5" y="205.5" width="5" height="6" fill="#6b9bd3" stroke="#1c3f7c" stroke-width="1" rx="0.6"/>
<rect x="648.5" y="202.5" width="5" height="6" fill="#77cc33" stroke="#1c6e2a" stroke-width="1" rx="0.6"/>
<rect x="644" y="200.3" width="1.1" height="13.5" fill="#ea3b3b"/><rect x="647.1" y="200.3" width="1.1" height="13.5" fill="#ea3b3b"/>
<rect x="783.5" y="200.5" width="6" height="5" fill="#6b9bd3" stroke="#1c3f7c" stroke-width="1" rx="0.6"/>
<rect x="790.5" y="208.5" width="6" height="5" fill="#77cc33" stroke="#1c6e2a" stroke-width="1" rx="0.6"/>
<rect x="780.9" y="205" width="18" height="1.1" fill="#ea3b3b"/><rect x="780.9" y="208.2" width="18" height="1.1" fill="#ea3b3b"/>
<rect x="671.7" y="249.7" width="67.79999999999995" height="17.600000000000023" fill="#fff" stroke="#b8b8b8" stroke-width="1"/>
<rect x="742.9" y="249.89999999999998" width="9.399999999999977" height="17.000000000000057" rx="4.5" fill="#fff" stroke="#b3b3b3" stroke-width="1"/>
<path d="M745.0 256.2 L747.6 253.8 L750.2 256.2 M745.0 260.6 L747.6 263.0 L750.2 260.6" stroke="#2a2a2a" stroke-width="1.25" fill="none"/>
<rect x="671.7" y="272.8" width="67.79999999999995" height="17.5" fill="#fff" stroke="#b8b8b8" stroke-width="1"/>
<rect x="742.9" y="273.0" width="9.399999999999977" height="16.900000000000034" rx="4.5" fill="#fff" stroke="#b3b3b3" stroke-width="1"/>
<path d="M745.0 279.3 L747.6 276.9 L750.2 279.3 M745.0 283.7 L747.6 286.1 L750.2 283.7" stroke="#2a2a2a" stroke-width="1.25" fill="none"/>
<rect x="671.7" y="327.8" width="67.79999999999995" height="17.30000000000001" fill="#fff" stroke="#b8b8b8" stroke-width="1"/>
<rect x="742.9" y="328.0" width="9.399999999999977" height="16.700000000000045" rx="4.5" fill="#fff" stroke="#b3b3b3" stroke-width="1"/>
<path d="M745.0 334.2 L747.6 331.8 L750.2 334.2 M745.0 338.6 L747.6 341.0 L750.2 338.6" stroke="#2a2a2a" stroke-width="1.25" fill="none"/>
<rect x="671.7" y="351.1" width="67.79999999999995" height="17.19999999999999" fill="#fff" stroke="#b8b8b8" stroke-width="1"/>
<rect x="742.9" y="351.3" width="9.399999999999977" height="16.600000000000023" rx="4.5" fill="#fff" stroke="#b3b3b3" stroke-width="1"/>
<path d="M745.0 357.4 L747.6 355.0 L750.2 357.4 M745.0 361.8 L747.6 364.2 L750.2 361.8" stroke="#2a2a2a" stroke-width="1.25" fill="none"/>
<rect x="671.7" y="403.7" width="67.79999999999995" height="17.600000000000023" fill="#fff" stroke="#b8b8b8" stroke-width="1"/>
<rect x="742.9" y="403.9" width="9.399999999999977" height="17.000000000000057" rx="4.5" fill="#fff" stroke="#b3b3b3" stroke-width="1"/>
<path d="M745.0 410.2 L747.6 407.8 L750.2 410.2 M745.0 414.6 L747.6 417.0 L750.2 414.6" stroke="#2a2a2a" stroke-width="1.25" fill="none"/>
<rect x="770.7" y="250.2" width="11" height="10.6" rx="2.2" fill="#fff" stroke="#a9a9a9" stroke-width="1"/>
<path d="M630.50 465.40 L640.20 465.40 L640.20 459.00 Z" fill="#93c6f2" stroke="#1c3f7c" stroke-width="1" stroke-linejoin="miter"/>
<path d="M642.20 455.80 L642.20 465.40 L649.60 465.40 Z" fill="#6b9bd3" stroke="#1c3f7c" stroke-width="1" stroke-linejoin="miter"/>
<path d="M631 461 V456.3 H636" stroke="#1787e0" stroke-width="1.6" fill="none"/><path d="M635.5 453.6 L638.6 456.3 L635.5 459 Z" fill="#1787e0"/>
<path d="M678.40 465.40 L685.60 465.40 L685.60 455.80 Z" fill="#6b9bd3" stroke="#1c3f7c" stroke-width="1" stroke-linejoin="miter"/>
<path d="M687.60 459.00 L687.60 465.40 L697.40 465.40 Z" fill="#93c6f2" stroke="#1c3f7c" stroke-width="1" stroke-linejoin="miter"/>
<path d="M697 461 V456.3 H692" stroke="#1787e0" stroke-width="1.6" fill="none"/><path d="M692.5 453.6 L689.4 456.3 L692.5 459 Z" fill="#1787e0"/>
<path d="M732.00 453.80 L741.00 453.80 L732.00 466.20 Z" fill="#6b9bd3" stroke="#1c3f7c" stroke-width="1" stroke-linejoin="miter"/>
<path d="M741.00 454.50 L741.00 466.20 L732.60 466.20 Z" fill="#93c6f2" stroke="#1c3f7c" stroke-width="1" stroke-linejoin="miter"/>
<path d="M726 458 V465.2 H730" stroke="#1787e0" stroke-width="1.6" fill="none"/><path d="M723.3 459 L726 455.6 L728.7 459 Z" fill="#1787e0"/>
<path d="M742.5 454.2 H746.5 V459" stroke="#1787e0" stroke-width="1.6" fill="none"/><path d="M743.8 458.3 L746.5 461.5 L749.2 458.3 Z" fill="#1787e0"/>
<path d="M822.30 459.40 L832.80 454.30 L832.80 459.40 Z" fill="#6b9bd3" stroke="#1c3f7c" stroke-width="1" stroke-linejoin="miter"/>
<path d="M822.30 461.30 L832.80 461.30 L832.80 466.50 Z" fill="#93c6f2" stroke="#1c3f7c" stroke-width="1" stroke-linejoin="miter"/>
<path d="M837 456.5 V464.5" stroke="#1787e0" stroke-width="1.5"/><path d="M834.6 457.2 L837 454.4 L839.4 457.2 Z M834.6 463.8 L837 466.6 L839.4 463.8 Z" fill="#1787e0"/>
<path d="M872.60 461.50 L878.40 461.50 L878.40 453.40 Z" fill="#93c6f2" stroke="#1c3f7c" stroke-width="1" stroke-linejoin="miter"/>
<path d="M880.20 453.40 L880.20 461.50 L886.50 461.50 Z" fill="#6b9bd3" stroke="#1c3f7c" stroke-width="1" stroke-linejoin="miter"/>
<path d="M875.5 465 H883.5" stroke="#1787e0" stroke-width="1.5"/><path d="M876.2 462.6 L873.4 465 L876.2 467.4 Z M882.8 462.6 L885.6 465 L882.8 467.4 Z" fill="#1787e0"/>
<rect x="627.3" y="516.5" width="8" height="8" fill="none" stroke="#2a78b0" stroke-width="1.1"/>
<rect x="632.3" y="521.5" width="8.2" height="8.1" fill="#fff" stroke="#2a78b0" stroke-width="1.1"/>
<rect x="626.00" y="515.20" width="2.6" height="2.6" fill="#3ccc3c" stroke="#1a8a1a" stroke-width="0.7"/>
<rect x="639.20" y="515.20" width="2.6" height="2.6" fill="#3ccc3c" stroke="#1a8a1a" stroke-width="0.7"/>
<rect x="626.00" y="528.30" width="2.6" height="2.6" fill="#3ccc3c" stroke="#1a8a1a" stroke-width="0.7"/>
<rect x="639.20" y="528.30" width="2.6" height="2.6" fill="#3ccc3c" stroke="#1a8a1a" stroke-width="0.7"/>
<rect x="675.4" y="516.5" width="8" height="8" fill="none" stroke="#2a78b0" stroke-width="1.1"/>
<rect x="680.4" y="521.3" width="8" height="8.3" fill="#fff" stroke="#2a78b0" stroke-width="1.1"/>
<rect x="674.10" y="515.20" width="2.6" height="2.6" fill="#3ccc3c" stroke="#1a8a1a" stroke-width="0.7"/>
<rect x="682.10" y="515.20" width="2.6" height="2.6" fill="#3ccc3c" stroke="#1a8a1a" stroke-width="0.7"/>
<rect x="674.10" y="523.20" width="2.6" height="2.6" fill="#3ccc3c" stroke="#1a8a1a" stroke-width="0.7"/>
<rect x="679.10" y="520.00" width="2.6" height="2.6" fill="#3ccc3c" stroke="#1a8a1a" stroke-width="0.7"/>
<rect x="687.10" y="520.00" width="2.6" height="2.6" fill="#3ccc3c" stroke="#1a8a1a" stroke-width="0.7"/>
<rect x="679.10" y="528.30" width="2.6" height="2.6" fill="#3ccc3c" stroke="#1a8a1a" stroke-width="0.7"/>
<rect x="687.10" y="528.30" width="2.6" height="2.6" fill="#3ccc3c" stroke="#1a8a1a" stroke-width="0.7"/>
<path d="M727.8 522 V518.3 Q727.8 516.4 729.8 516.4 H731.6 Q733.5 516.4 733.5 518.3 V522" fill="none" stroke="#5c5c5c" stroke-width="1.1"/>
<rect x="725" y="521.9" width="11" height="8.8" fill="#8ba7b7"/>
<circle cx="730.5" cy="525.3" r="1.3" fill="#3a4a58"/><rect x="730" y="525.3" width="1" height="3.2" fill="#3a4a58"/>
<path d="M771.8 521.6 V518.3 Q771.8 516.4 773.7 516.4 H775.4 Q777.3 516.4 777.3 518.3 V522" fill="none" stroke="#a8a8a8" stroke-width="1.1"/>
<rect x="775.1" y="521.9" width="10.8" height="8.8" fill="#c8d6de"/>
<circle cx="780.5" cy="525.3" r="1.2" fill="#9aaab4"/><rect x="780" y="525.3" width="1" height="3.2" fill="#9aaab4"/>
<rect x="633.6" y="586.5" width="12.8" height="12.8" fill="#8fb6e6" stroke="#1c3f7c" stroke-width="1.1"/>
<rect x="637.6" y="590.5" width="5" height="5" fill="#77cc33" stroke="#1c6e2a" stroke-width="1.1"/>
<path d="M638.6 589 L640.1 587.8 L641.6 589 Z M638.6 597 L640.1 598.2 L641.6 597 Z M636 591.6 L634.8 593 L636 594.4 Z M644.2 591.6 L645.4 593 L644.2 594.4 Z" fill="#1c3f7c"/>
<rect x="681.5" y="593.9" width="12.8" height="5.4" fill="#8fb6e6" stroke="#1c3f7c" stroke-width="1.1"/>
<rect x="685.5" y="587.2" width="4.8" height="3.6" fill="#77cc33" stroke="#1c6e2a" stroke-width="1.1"/>
<path d="M684 587 L681.3 589 L684 591 Z M691.8 587 L694.5 589 L691.8 591 Z" fill="#1c3f7c"/>
<rect x="736.7" y="586.5" width="5.8" height="12.8" fill="#8fb6e6" stroke="#1c3f7c" stroke-width="1.1"/>
<rect x="729.5" y="590.8" width="3.6" height="4.6" fill="#77cc33" stroke="#1c6e2a" stroke-width="1.1"/>
<path d="M729.3 589.3 L731.3 586.5 L733.3 589.3 Z M729.3 596.8 L731.3 599.6 L733.3 596.8 Z" fill="#1c3f7c"/></svg>
<div class="t" style="left:555.0px;width:200px;text-align:center;top:41.3px;font-size:12.6px;line-height:12.6px;color:#fff;font-weight:normal;">Arrange &amp; Size</div>
<div class="t" style="left:658.4px;width:200px;text-align:center;top:42.0px;font-size:12.7px;line-height:12.7px;color:#262626;font-weight:normal;">Format</div>
<div class="t" style="left:762.3px;width:200px;text-align:center;top:42.0px;font-size:12.7px;line-height:12.7px;color:#262626;font-weight:normal;">Text</div>
<div class="t" style="left:625.0px;top:69.5px;font-size:11.7px;line-height:11.7px;color:#262626;font-weight:normal;">Order</div>
<div class="t" style="left:625.5px;top:136.3px;font-size:11.7px;line-height:11.7px;color:#262626;font-weight:normal;">Align and Distribute</div>
<div class="t" style="left:625.0px;top:231.3px;font-size:11.7px;line-height:11.7px;color:#262626;font-weight:normal;">Size</div>
<div class="t" style="left:625.0px;top:307.2px;font-size:11.7px;line-height:11.7px;color:#262626;font-weight:normal;">Position</div>
<div class="t" style="left:623.7px;top:383.8px;font-size:11.7px;line-height:11.7px;color:#262626;font-weight:normal;">Rotate and Flip</div>
<div class="t" style="left:624.2px;top:494.9px;font-size:11.7px;line-height:11.7px;color:#262626;font-weight:normal;">Group and Lock</div>
<div class="t" style="left:626.0px;top:562.7px;font-size:11.7px;line-height:11.7px;color:#262626;font-weight:normal;">Make Same</div>
<div class="t" style="left:539.5px;width:200px;text-align:center;top:110.7px;font-size:9.8px;line-height:9.8px;color:#262626;font-weight:normal;">Back</div>
<div class="t" style="left:587.2px;width:200px;text-align:center;top:110.7px;font-size:9.8px;line-height:9.8px;color:#262626;font-weight:normal;">Front</div>
<div class="t" style="left:635.0px;width:200px;text-align:center;top:110.7px;font-size:9.8px;line-height:9.8px;color:#262626;font-weight:normal;">Backward</div>
<div class="t" style="left:681.5px;width:200px;text-align:center;top:110.7px;font-size:9.8px;line-height:9.8px;color:#262626;font-weight:normal;">Forward</div>
<div class="t" style="left:539.3px;width:200px;text-align:center;top:181.7px;font-size:9.8px;line-height:9.8px;color:#262626;font-weight:normal;">Left</div>
<div class="t" style="left:589.7px;width:200px;text-align:center;top:181.7px;font-size:9.8px;line-height:9.8px;color:#262626;font-weight:normal;">Center</div>
<div class="t" style="left:635.3px;width:200px;text-align:center;top:181.7px;font-size:9.8px;line-height:9.8px;color:#262626;font-weight:normal;">Right</div>
<div class="t" style="left:684.0px;width:200px;text-align:center;top:181.7px;font-size:9.8px;line-height:9.8px;color:#262626;font-weight:normal;">Top</div>
<div class="t" style="left:731.7px;width:200px;text-align:center;top:181.7px;font-size:9.8px;line-height:9.8px;color:#262626;font-weight:normal;">Middle</div>
<div class="t" style="left:779.8px;width:200px;text-align:center;top:181.7px;font-size:9.8px;line-height:9.8px;color:#262626;font-weight:normal;">Bottom</div>
<div class="t" style="left:662.6px;top:201.2px;font-size:11.6px;line-height:11.6px;color:#262626;font-weight:normal;">Horizontal</div>
<div class="t" style="left:806.5px;top:201.2px;font-size:11.6px;line-height:11.6px;color:#262626;font-weight:normal;">Vertical</div>
<div class="t" style="left:625.6px;top:253.1px;font-size:11.6px;line-height:11.6px;color:#262626;font-weight:normal;">Width:</div>
<div class="t" style="left:625.6px;top:276.0px;font-size:11.6px;line-height:11.6px;color:#262626;font-weight:normal;">Height</div>
<div class="t" style="left:787.7px;top:249.0px;font-size:11.8px;line-height:11.8px;color:#262626;font-weight:normal;">Lock Proportions</div>
<div class="t" style="left:675.9px;top:252.8px;font-size:12px;line-height:12px;color:#262626;font-weight:normal;">11.6 mm</div>
<div class="t" style="left:675.9px;top:275.7px;font-size:12px;line-height:12px;color:#262626;font-weight:normal;">43.4 mm</div>
<div class="t" style="left:625.6px;top:331.1px;font-size:11.6px;line-height:11.6px;color:#262626;font-weight:normal;">X</div>
<div class="t" style="left:625.6px;top:354.0px;font-size:11.6px;line-height:11.6px;color:#262626;font-weight:normal;">Y</div>
<div class="t" style="left:675.9px;top:330.8px;font-size:12px;line-height:12px;color:#262626;font-weight:normal;">42.8 mm</div>
<div class="t" style="left:675.9px;top:353.8px;font-size:12px;line-height:12px;color:#262626;font-weight:normal;">43.9 mm</div>
<div class="t" style="left:622.4px;top:407.1px;font-size:11.6px;line-height:11.6px;color:#262626;font-weight:normal;">Angle</div>
<div class="t" style="left:675.5px;top:406.5px;font-size:12.4px;line-height:12.4px;color:#262626;font-weight:normal;">-90.00 deg</div>
<div class="t" style="left:625.5px;top:429.8px;font-size:11.6px;line-height:11.6px;color:#262626;font-weight:normal;">Pin</div>
<div class="t" style="left:679.5px;top:429.8px;font-size:12px;line-height:12px;color:#262626;font-weight:normal;">Center-Center</div>
<div class="t" style="left:769.5px;top:456.2px;font-size:11.6px;line-height:11.6px;color:#262626;font-weight:normal;">Flip</div>
<div class="t" style="left:540.8px;width:200px;text-align:center;top:470.7px;font-size:9.8px;line-height:9.8px;color:#262626;font-weight:normal;">90º CW</div>
<div class="t" style="left:592.8px;width:200px;text-align:center;top:470.7px;font-size:9.8px;line-height:9.8px;color:#262626;font-weight:normal;">90º CCW</div>
<div class="t" style="left:635.2px;width:200px;text-align:center;top:470.7px;font-size:9.8px;line-height:9.8px;color:#262626;font-weight:normal;">180º</div>
<div class="t" style="left:728.7px;width:200px;text-align:center;top:470.7px;font-size:9.8px;line-height:9.8px;color:#262626;font-weight:normal;">Vertical</div>
<div class="t" style="left:775.9px;width:200px;text-align:center;top:470.7px;font-size:9.8px;line-height:9.8px;color:#262626;font-weight:normal;">Horizontal</div>
<div class="t" style="left:533.8px;width:200px;text-align:center;top:537.2px;font-size:9.8px;line-height:9.8px;color:#262626;font-weight:normal;">Group</div>
<div class="t" style="left:583.7px;width:200px;text-align:center;top:537.2px;font-size:9.8px;line-height:9.8px;color:#262626;font-weight:normal;">UnGroup</div>
<div class="t" style="left:629.7px;width:200px;text-align:center;top:537.2px;font-size:9.8px;line-height:9.8px;color:#262626;font-weight:normal;">Lock</div>
<div class="t" style="left:677.6px;width:200px;text-align:center;top:537.2px;font-size:9.8px;line-height:9.8px;color:#262626;font-weight:normal;">UnLock</div>
<div class="t" style="left:538.5px;width:200px;text-align:center;top:604.4px;font-size:9.8px;line-height:9.8px;color:#262626;font-weight:normal;">Size</div>
<div class="t" style="left:586.6px;width:200px;text-align:center;top:604.4px;font-size:9.8px;line-height:9.8px;color:#262626;font-weight:normal;">Width</div>
<div class="t" style="left:637.6px;width:200px;text-align:center;top:604.4px;font-size:9.8px;line-height:9.8px;color:#262626;font-weight:normal;">Height</div>
</body></html>
